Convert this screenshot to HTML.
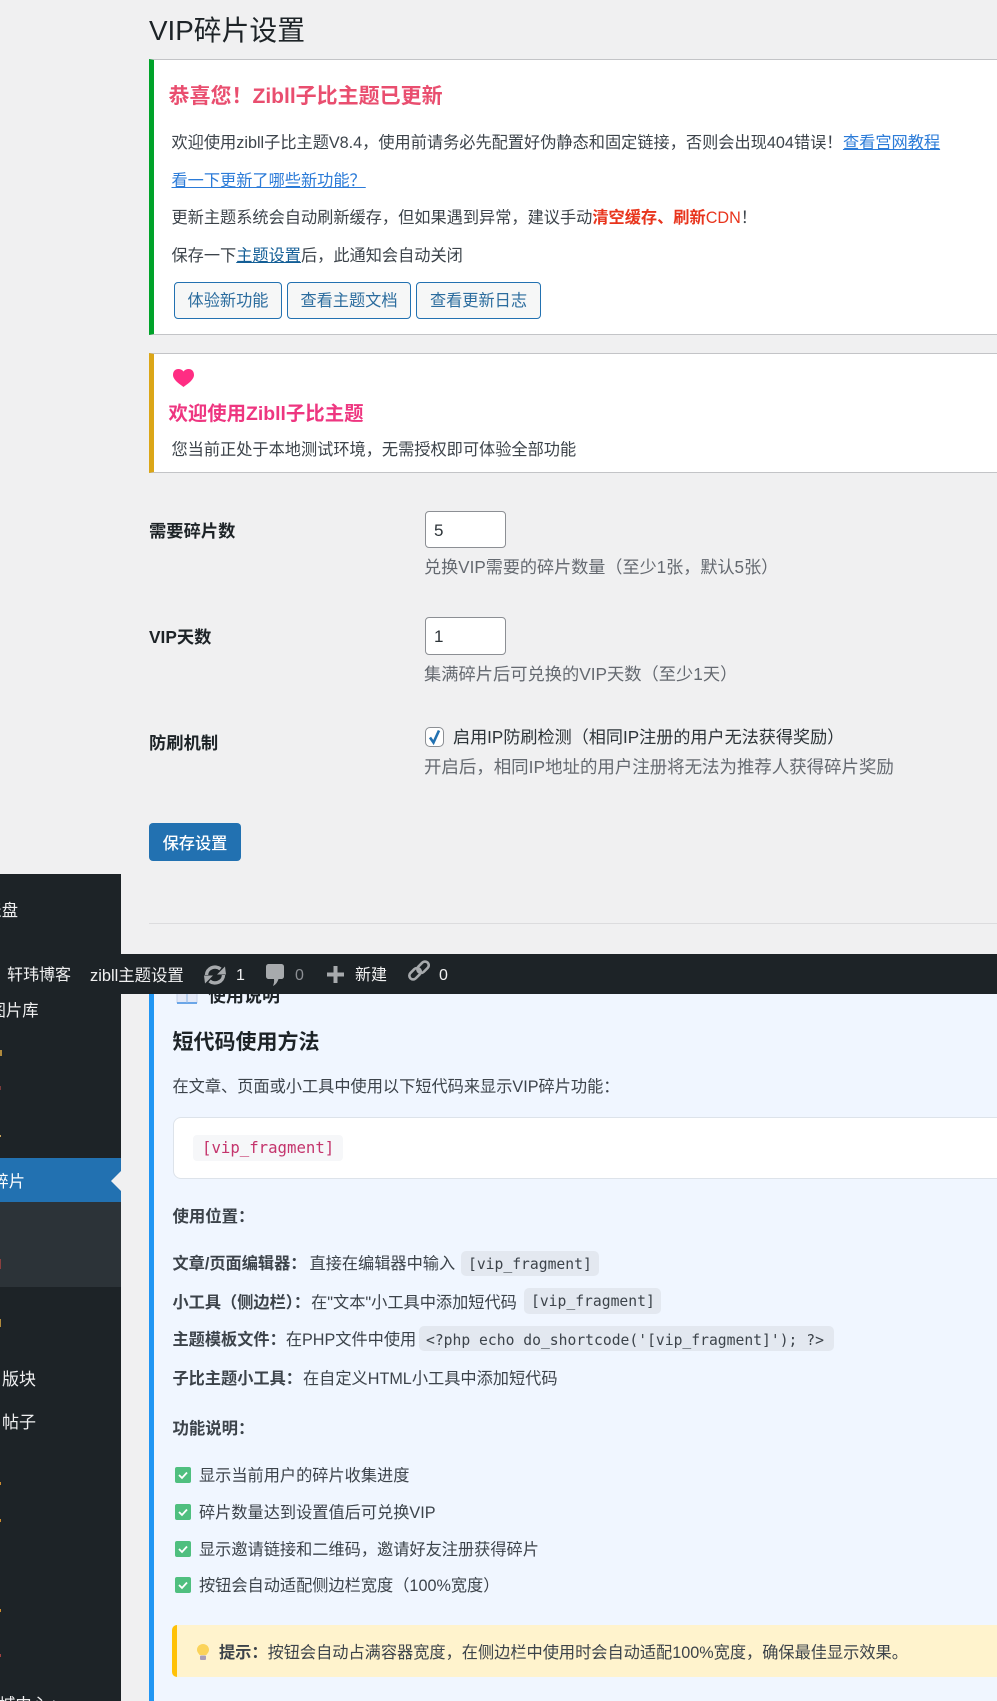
<!DOCTYPE html>
<html lang="zh-CN">
<head>
<meta charset="utf-8">
<title>VIP碎片设置</title>
<style>
html,body{margin:0;padding:0;background:#f0f0f1;}
body{position:relative;width:997px;height:1701px;overflow:hidden;font-family:"Liberation Sans","Noto Sans CJK SC",sans-serif;color:#3c434a;}
.t{position:absolute;white-space:nowrap;line-height:24px;font-size:16.2px;}
.b{font-weight:700;}
.box{position:absolute;box-sizing:border-box;}
a{color:#2271b1;}
.notice{background:#fff;border:1px solid #c3c4c7;border-left:5px solid #00a32a;border-right:0;left:149px;width:848px;}
.btn{position:absolute;box-sizing:border-box;top:282px;height:37px;line-height:37px;text-align:center;border:1px solid #2271b1;border-radius:4px;background:#f6f7f7;color:#2b6c9e;font-size:16.2px;}
.inp{position:absolute;box-sizing:border-box;left:425px;width:81px;background:#fff;border:1px solid #8c8f94;border-radius:4px;font-size:17px;color:#2c3338;padding-left:8px;}
.desc{color:#646970;font-size:17.1px;}
.lab{color:#1d2327;font-weight:700;font-size:17.3px;}
.side{position:absolute;left:0;top:874px;width:121px;height:827px;background:#1d2327;overflow:hidden;}
.side .s{position:absolute;white-space:nowrap;font-size:16.3px;line-height:24px;color:#f0f0f1;}
.side i{position:absolute;left:0;display:block;}
.bar{position:absolute;left:0;top:954px;width:997px;height:40px;background:#1d2327;color:#f0f0f1;font-size:16px;z-index:5;}
.bar span{position:absolute;top:10px;line-height:24px;white-space:nowrap;}
.bar svg{position:absolute;}
.panel{position:absolute;left:149px;top:960px;width:848px;height:741px;background:#f0f6ff;border-left:5px solid #2196f3;box-sizing:border-box;}
.c{position:absolute;box-sizing:border-box;height:25px;line-height:27px;background:#e3e8f0;border-radius:5px;font-family:"DejaVu Sans Mono",monospace;font-size:14.7px;color:#3c434a;padding-left:7px;white-space:pre;}
.chk{position:absolute;left:175px;width:16px;height:16px;background:#4fbf7f;border-radius:2px;}
.chk svg{position:absolute;left:0;top:0;}
</style>
</head>
<body>

<div class="t" style="left:149px;top:13px;font-size:27.8px;line-height:36px;color:#1d2327;">VIP碎片设置</div>

<div class="box notice" style="top:59px;height:276px;"></div>
<div class="t b" style="left:168.5px;top:83px;font-size:21px;line-height:28px;color:#e94e6f;">恭喜您！Zibll子比主题已更新</div>
<div class="t" style="left:171.5px;top:131px;word-spacing:-4px;">欢迎使用zibll子比主题V8.4，使用前请务必先配置好伪静态和固定链接，否则会出现404错误！ <a href="#" style="color:#2b7bd8;">查看宫网教程</a></div>
<div class="t" style="left:171.5px;top:169px;"><a href="#" style="color:#2b7bd8;">看一下更新了哪些新功能？</a></div>
<div class="t" style="left:171.5px;top:206px;">更新主题系统会自动刷新缓存，但如果遇到异常，建议手动<b style="color:#e8341c;">清空缓存、刷新</b><span style="color:#e8341c;">CDN</span>！</div>
<div class="t" style="left:171.5px;top:244px;">保存一下<a href="#" style="color:#135e96;">主题设置</a>后，此通知会自动关闭</div>
<div class="btn" style="left:174px;width:108px;">体验新功能</div>
<div class="btn" style="left:287px;width:124px;">查看主题文档</div>
<div class="btn" style="left:416px;width:125px;">查看更新日志</div>

<div class="box notice" style="top:353px;height:120px;border-left-color:#dba617;"></div>
<svg class="box" style="left:173px;top:369px;" width="21" height="18" viewBox="0 0 21 18"><path d="M10.5 18C8 15.8 0 11.500 0 5.900 0 2.200 2.400 0 5.300 0 7.400 0 9.300 .8 10.500 2.500 11.700 .8 13.600 0 15.700 0 18.600 0 21 2.200 21 5.900 21 11.500 13 15.800 10.500 18Z" fill="#ff2d83"/></svg>
<div class="t b" style="left:168.500px;top:400px;font-size:19.4px;line-height:28px;color:#ee3680;">欢迎使用Zibll子比主题</div>
<div class="t" style="left:171.500px;top:438px;">您当前正处于本地测试环境，无需授权即可体验全部功能</div>

<div class="t lab" style="left:149px;top:519px;">需要碎片数</div>
<div class="inp" style="top:511px;height:37px;line-height:37px;">5</div>
<div class="t desc" style="left:424px;top:556px;">兑换VIP需要的碎片数量（至少1张，默认5张）</div>

<div class="t lab" style="left:149px;top:625px;">VIP天数</div>
<div class="inp" style="top:617px;height:38px;line-height:38px;">1</div>
<div class="t desc" style="left:424px;top:662px;font-size:17.25px;">集满碎片后可兑换的VIP天数（至少1天）</div>

<div class="t lab" style="left:149px;top:731px;">防刷机制</div>
<div class="box" style="left:425px;top:727px;width:19px;height:20px;background:#fff;border:1px solid #8c8f94;border-radius:5px;"></div>
<svg class="box" style="left:425px;top:727px;" width="19" height="20" viewBox="0 0 19 20"><path d="M5 10.500L8.500 15.500 14 3.500" fill="none" stroke="#2271b1" stroke-width="2.600"/></svg>
<div class="t" style="left:453px;top:726px;font-size:17.100px;color:#2c3338;">启用IP防刷检测（相同IP注册的用户无法获得奖励）</div>
<div class="t desc" style="left:424px;top:755px;font-size:17.45px;">开启后，相同IP地址的用户注册将无法为推荐人获得碎片奖励</div>

<div class="box" style="left:149px;top:823px;width:92px;height:38px;line-height:42px;background:#2271b1;border-radius:4px;color:#fff;text-align:center;font-size:16.200px;font-weight:500;">保存设置</div>

<div class="box" style="left:149px;top:923px;width:848px;height:1px;background:#dcdcde;"></div>

<div class="panel"></div>
<svg class="box" style="left:176px;top:985px;" width="22" height="20" viewBox="0 0 22 20"><path d="M1 2H10.500L11 3 11.500 2H21V17.500H1Z" fill="#e4e9f7" stroke="#c6d2ea" stroke-width="1"/><path d="M1 18H21" stroke="#6aa6e8" stroke-width="2"/><path d="M11 3V18" stroke="#8db5e6"/></svg>
<div class="t b" style="left:208px;top:984px;font-size:18px;color:#1d2327;">使用说明</div>
<div class="t b" style="left:172.500px;top:1028px;font-size:21px;line-height:30px;color:#1d2327;">短代码使用方法</div>
<div class="t" style="left:172.500px;top:1075px;">在文章、页面或小工具中使用以下短代码来显示VIP碎片功能：</div>

<div class="box" style="left:172.500px;top:1116.500px;width:840px;height:62px;background:#fff;border:1px solid #dde3ea;border-radius:8px;"></div>
<div class="box" style="left:193px;top:1135px;width:150px;height:26px;line-height:26px;background:#f6f7f9;border-radius:4px;font-family:'DejaVu Sans Mono',monospace;font-size:15.700px;color:#c4346c;padding-left:9px;white-space:pre;">[vip_fragment]</div>

<div class="t b" style="left:172.500px;top:1205px;font-size:16.4px;">使用位置：</div>

<div class="t" style="left:172.500px;top:1252px;"><b style="margin-right:3px;">文章/页面编辑器：</b>直接在编辑器中输入</div>
<div class="c" style="left:461px;top:1251px;width:138px;">[vip_fragment]</div>
<div class="t" style="left:172.500px;top:1291px;"><b style="margin-right:1px;">小工具（侧边栏）：</b>在"文本"小工具中添加短代码</div>
<div class="c" style="left:524px;top:1288px;width:137px;height:26px;line-height:28px;">[vip_fragment]</div>
<div class="t" style="left:172.500px;top:1328px;"><b>主题模板文件：</b>在PHP文件中使用</div>
<div class="c" style="left:419px;top:1326px;width:415px;line-height:29px;">&lt;?php echo do_shortcode('[vip_fragment]'); ?&gt;</div>
<div class="t" style="left:172.500px;top:1367px;"><b style="margin-right:1px;">子比主题小工具：</b>在自定义HTML小工具中添加短代码</div>

<div class="t b" style="left:172.500px;top:1417px;font-size:16.4px;">功能说明：</div>

<div class="chk" style="top:1467px;"><svg width="16" height="16" viewBox="0 0 16 16"><path d="M4 8L7 11 12 5.500" fill="none" stroke="#fff" stroke-width="1.800"/></svg></div>
<div class="t" style="left:199px;top:1464px;">显示当前用户的碎片收集进度</div>
<div class="chk" style="top:1504px;"><svg width="16" height="16" viewBox="0 0 16 16"><path d="M4 8L7 11 12 5.500" fill="none" stroke="#fff" stroke-width="1.800"/></svg></div>
<div class="t" style="left:199px;top:1501px;">碎片数量达到设置值后可兑换VIP</div>
<div class="chk" style="top:1541px;"><svg width="16" height="16" viewBox="0 0 16 16"><path d="M4 8L7 11 12 5.500" fill="none" stroke="#fff" stroke-width="1.800"/></svg></div>
<div class="t" style="left:199px;top:1538px;">显示邀请链接和二维码，邀请好友注册获得碎片</div>
<div class="chk" style="top:1577px;"><svg width="16" height="16" viewBox="0 0 16 16"><path d="M4 8L7 11 12 5.500" fill="none" stroke="#fff" stroke-width="1.800"/></svg></div>
<div class="t" style="left:199px;top:1574px;">按钮会自动适配侧边栏宽度（100%宽度）</div>

<div class="box" style="left:172px;top:1625px;width:840px;height:52px;background:#fff3cd;border-left:5px solid #ffc107;border-radius:5px;"></div>
<svg class="box" style="left:197px;top:1644px;" width="12" height="17" viewBox="0 0 12 17"><path d="M6 0C2.700 0 0 2.500 0 5.700 0 8 1.500 9.300 2.600 11H9.400C10.500 9.300 12 8 12 5.700 12 2.500 9.300 0 6 0Z" fill="#fbd35a"/><rect x="3" y="11.500" width="6" height="4.500" rx="1" fill="#a99fb8"/></svg>
<div class="t" style="left:219px;top:1641px;"><b>提示：</b>按钮会自动占满容器宽度，在侧边栏中使用时会自动适配100%宽度，确保最佳显示效果。</div>

<div class="side">
  <div class="s" style="right:103px;top:25px;">仪表盘</div>
  <div class="s" style="right:82.500px;top:125px;">图片库</div>
  <i style="top:176px;width:2px;height:6px;background:#b08a3c;"></i>
  <i style="top:212px;width:1px;height:4px;background:#7a3a3a;"></i>
  <i style="top:261px;width:1px;height:2px;background:#c9a35a;"></i>
  <div class="box" style="left:0;top:284px;width:121px;height:44px;background:#2271b1;"></div>
  <div class="s" style="right:96px;top:296px;color:#fff;">VIP碎片</div>
  <div class="box" style="left:111px;top:297px;width:0;height:0;border:10px solid transparent;border-left:0;border-right-color:#f0f0f1;"></div>
  <div class="box" style="left:0;top:328px;width:121px;height:85px;background:#2c3338;"></div>
  <i style="top:385px;width:1px;height:10px;background:#8a3f3f;"></i>
  <i style="top:445px;width:1px;height:8px;background:#b08a3c;"></i>
  <div class="s" style="right:85px;top:494px;font-size:17px;">版块</div>
  <div class="s" style="right:85px;top:537px;font-size:17px;">帖子</div>
  <i style="top:608px;width:1px;height:3px;background:#c98a30;"></i>
  <i style="top:645px;width:1px;height:3px;background:#c98a30;"></i>
  <i style="top:735px;width:1px;height:3px;background:#c98a30;"></i>
  <i style="top:780px;width:1px;height:3px;background:#a04040;"></i>
  <div class="s" style="right:59px;top:819px;">商城中心 &gt;</div>
</div>

<div class="bar">
  <span style="left:7px;">轩玮博客</span>
  <span style="left:90px;font-size:16.400px;">zibll主题设置</span>
  <svg style="left:203px;top:11px;" width="24" height="20" viewBox="0 0 24 20"><g fill="#a7aaad"><path d="M3.500 10A8.500 8 0 0 1 17.500 4" fill="none" stroke="#a7aaad" stroke-width="3.400"/><path d="M14 9.500H23L22 1.500Z"/><path d="M20.500 10A8.500 8 0 0 1 6.500 16" fill="none" stroke="#a7aaad" stroke-width="3.400"/><path d="M10 10.500H1L2 18.500Z"/></g></svg>
  <span style="left:236px;">1</span>
  <svg style="left:266px;top:10px;" width="18" height="22" viewBox="0 0 18 22"><path d="M3 0H15C17 0 18 1 18 3V12C18 14 17 15 15 15H12.500C11.500 18 10 20.500 7 22 8 19.500 8.300 17 8 15H3C1 15 0 14 0 12V3C0 1 1 0 3 0Z" fill="#a7aaad"/></svg>
  <span style="left:295px;color:#8c8f94;">0</span>
  <svg style="left:327px;top:12px;" width="17" height="17" viewBox="0 0 17 17"><path d="M6.500 0H10.500V6.500H17V10.500H10.500V17H6.500V10.500H0V6.500H6.500Z" fill="#a7aaad"/></svg>
  <span style="left:355px;">新建</span>
  <svg style="left:408px;top:6px;" width="22" height="22" viewBox="0 0 22 22"><g fill="none" stroke="#a7aaad" stroke-width="2.600"><rect x="0.500" y="10" width="13" height="7.500" rx="3.700" transform="rotate(-45 7 13.700)"/><rect x="8.500" y="3.500" width="13" height="7.500" rx="3.700" transform="rotate(-45 15 7.200)"/></g></svg>
  <span style="left:439px;">0</span>
</div>

</body>
</html>
